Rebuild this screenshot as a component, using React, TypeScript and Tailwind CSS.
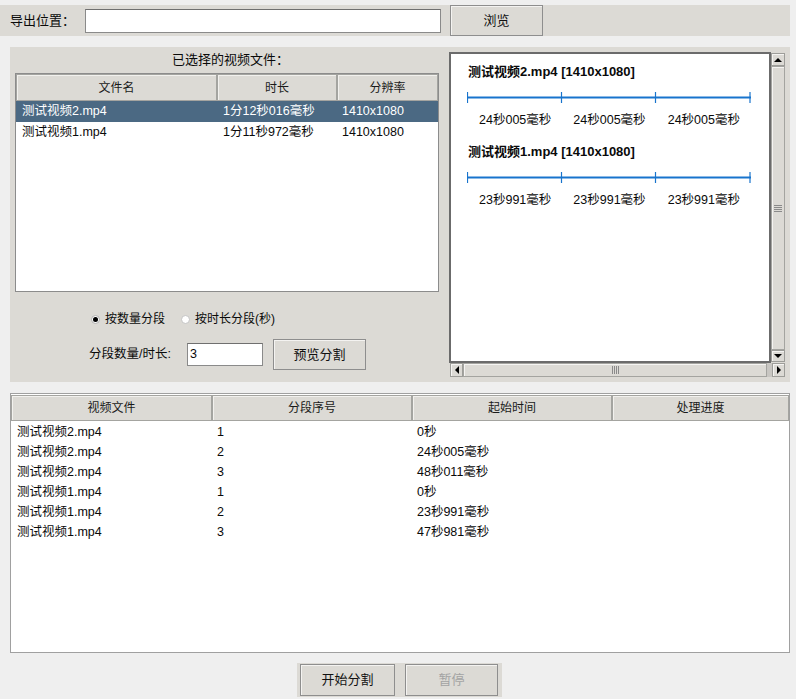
import React from "react";

const font = "font-['Liberation_Sans','Noto_Sans_CJK_SC',sans-serif]";

const selectedFiles = [
  { name: "测试视频2.mp4", duration: "1分12秒016毫秒", size: "1410x1080" },
  { name: "测试视频1.mp4", duration: "1分11秒972毫秒", size: "1410x1080" },
];

const previews = [
  { title: "测试视频2.mp4 [1410x1080]", parts: ["24秒005毫秒", "24秒005毫秒", "24秒005毫秒"] },
  { title: "测试视频1.mp4 [1410x1080]", parts: ["23秒991毫秒", "23秒991毫秒", "23秒991毫秒"] },
];

const segments = [
  { file: "测试视频2.mp4", idx: "1", start: "0秒" },
  { file: "测试视频2.mp4", idx: "2", start: "24秒005毫秒" },
  { file: "测试视频2.mp4", idx: "3", start: "48秒011毫秒" },
  { file: "测试视频1.mp4", idx: "1", start: "0秒" },
  { file: "测试视频1.mp4", idx: "2", start: "23秒991毫秒" },
  { file: "测试视频1.mp4", idx: "3", start: "47秒981毫秒" },
];

function Button({ children, className = "", disabled = false }: { children: React.ReactNode; className?: string; disabled?: boolean }) {
  return (
    <div
      className={`flex items-center justify-center bg-[#dcdad5] border border-[#8e8e8e] shadow-[inset_1px_1px_0_#f4f3f1] text-[13px] ${
        disabled ? "text-[#a3a3a3]" : "text-[#111]"
      } ${className}`}
    >
      {children}
    </div>
  );
}

function HeaderCell({ children, className = "" }: { children: React.ReactNode; className?: string }) {
  return (
    <div
      className={`flex items-center justify-center bg-[#dcdad5] border border-[#a4a4a0] shadow-[inset_1px_1px_0_#f2f1ee] text-[12px] text-[#1a1a1a] ${className}`}
    >
      {children}
    </div>
  );
}

function Timeline() {
  return (
    <svg width="284" height="11" className="block">
      <line x1="0" y1="5.5" x2="284" y2="5.5" stroke="#1874cd" strokeWidth="2" />
      {[0.5, 94.5, 188.5, 283].map((x) => (
        <line key={x} x1={x} y1="0" x2={x} y2="11" stroke="#1874cd" strokeWidth="1.2" />
      ))}
    </svg>
  );
}

function Arrow({ dir }: { dir: "up" | "down" | "left" | "right" }) {
  const pts = {
    up: "1,6 9,6 5,2",
    down: "1,2 9,2 5,6",
    left: "6,1 6,9 2,5",
    right: "2,1 2,9 6,5",
  }[dir];
  const w = dir === "up" || dir === "down" ? 10 : 8;
  const h = dir === "up" || dir === "down" ? 8 : 10;
  return (
    <svg width={w} height={h}>
      <polygon points={pts} fill="#000" />
    </svg>
  );
}

function ScrollBtn({ dir, className = "" }: { dir: "up" | "down" | "left" | "right"; className?: string }) {
  return (
    <div
      className={`flex items-center justify-center bg-[#dcdad5] border border-[#9d9d99] shadow-[inset_1px_1px_0_#f5f4f2] ${className}`}
    >
      <Arrow dir={dir} />
    </div>
  );
}

export default function App() {
  return (
    <div className={`w-[796px] h-[699px] bg-[#efefef] flex flex-col text-[12.5px] text-[#0a0a0a] ${font}`}>
      {/* export path bar */}
      <div className="mt-[5px] h-[31px] w-[790px] bg-[#dcdad5] flex items-center">
        <div className="ml-[10px] w-[75px] text-[13px]">导出位置：</div>
        <div className="w-[356px] h-[24px] bg-white border border-[#8a8a8a] border-t-[#6f6f6f]" />
        <Button className="ml-[9px] w-[93px] h-[31px]">浏览</Button>
      </div>

      {/* middle panel */}
      <div className="mt-[11px] ml-[10px] w-[780px] h-[335px] bg-[#dcdad5] flex">
        <div className="w-[439px] flex flex-col">
          <div className="h-[26px] flex items-center justify-center text-[13px] pl-[2px]">已选择的视频文件：</div>
          <div className="ml-[5px] w-[424px] h-[219px] bg-white border border-[#8c8c8c]">
            <div className="flex h-[27px]">
              <HeaderCell className="w-[201px]">文件名</HeaderCell>
              <HeaderCell className="w-[120px]">时长</HeaderCell>
              <HeaderCell className="w-[101px]">分辨率</HeaderCell>
            </div>
            {selectedFiles.map((f, i) => (
              <div
                key={f.name}
                className={`flex items-center ${i === 0 ? "h-[21px] bg-[#4b6983] text-white" : "h-[20px]"}`}
              >
                <div className="w-[201px] pl-[6px]">{f.name}</div>
                <div className="w-[120px] pl-[6px]">{f.duration}</div>
                <div className="w-[101px] pl-[5px]">{f.size}</div>
              </div>
            ))}
          </div>

          <div className="mt-[18px] h-[18px] flex items-center pl-[81px] text-[12px]">
            <div className="w-[9px] h-[9px] rounded-full bg-white border border-[#b0b0b0] flex items-center justify-center">
              <div className="w-[5px] h-[5px] rounded-full bg-black" />
            </div>
            <span className="ml-[5px]">按数量分段</span>
            <div className="ml-[16px] w-[9px] h-[9px] rounded-full bg-white border border-[#c4c4c4]" />
            <span className="ml-[5px]">按时长分段(秒)</span>
          </div>

          <div className="mt-[11px] h-[31px] flex items-center pl-[79px]">
            <span className="w-[98px]">分段数量/时长:</span>
            <div className="w-[76px] h-[23px] bg-white border border-[#8a8a8a] border-t-[#6f6f6f] flex items-center pl-[2px]">
              3
            </div>
            <Button className="ml-[10px] w-[93px] h-[31px]">预览分割</Button>
          </div>
        </div>

        {/* preview */}
        <div className="mt-[5px] w-[336px] h-[325px] flex flex-col">
          <div className="flex h-[311px]">
            <div className="w-[322px] h-full bg-white border-2 border-[#6b6b6b]">
              <div className="pl-[17px] pt-[10px]">
                {previews.map((p, i) => (
                  <div key={p.title} className={i === 0 ? "" : "mt-[17px]"}>
                    <div className="h-[16px] flex items-center font-bold text-[13px]">{p.title}</div>
                    <div className="mt-[12px] -ml-[1px]">
                      <Timeline />
                    </div>
                    <div className="mt-[8px] h-[16px] w-[283px] grid grid-cols-3 text-center items-center">
                      {p.parts.map((t, j) => (
                        <span key={j}>{t}</span>
                      ))}
                    </div>
                  </div>
                ))}
              </div>
            </div>
            <div className="w-[14px] h-full flex flex-col bg-[#dcdad5]">
              <ScrollBtn dir="up" className="h-[13px] mt-[1px]" />
              <div className="flex-1 border border-[#a4a4a0] shadow-[inset_1px_1px_0_#f5f4f2] flex items-center justify-center">
                <div className="w-[8px] flex flex-col gap-[1px]">
                  <div className="h-[1px] bg-[#8a8a8a]" />
                  <div className="h-[1px] bg-[#8a8a8a]" />
                  <div className="h-[1px] bg-[#8a8a8a]" />
                  <div className="h-[1px] bg-[#8a8a8a]" />
                </div>
              </div>
              <ScrollBtn dir="down" className="h-[12px] mb-[1px]" />
            </div>
          </div>
          <div className="h-[14px] flex bg-[#dcdad5]">
            <ScrollBtn dir="left" className="w-[13px] ml-[1px]" />
            <div className="flex-1 border border-[#a4a4a0] shadow-[inset_1px_1px_0_#f5f4f2] flex items-center justify-center">
              <div className="h-[8px] flex gap-[1px]">
                <div className="w-[1px] bg-[#8a8a8a]" />
                <div className="w-[1px] bg-[#8a8a8a]" />
                <div className="w-[1px] bg-[#8a8a8a]" />
                <div className="w-[1px] bg-[#8a8a8a]" />
              </div>
            </div>
            <div className="w-[5px] bg-[#c8c6c2]" />
            <ScrollBtn dir="right" className="w-[13px]" />
          </div>
        </div>
      </div>

      {/* segments table */}
      <div className="mt-[11px] ml-[10px] w-[780px] h-[260px] bg-white border border-[#a0a0a0]">
        <div className="flex h-[27px] pt-[1px]">
          <HeaderCell className="w-[201px]">视频文件</HeaderCell>
          <HeaderCell className="w-[200px]">分段序号</HeaderCell>
          <HeaderCell className="w-[200px]">起始时间</HeaderCell>
          <HeaderCell className="flex-1">处理进度</HeaderCell>
        </div>
        <div className="pt-[1px]">
          {segments.map((s, i) => (
            <div key={i} className="flex h-[20px] items-center">
              <div className="w-[201px] pl-[6px]">{s.file}</div>
              <div className="w-[200px] pl-[5px]">{s.idx}</div>
              <div className="w-[200px] pl-[5px]">{s.start}</div>
              <div className="flex-1" />
            </div>
          ))}
        </div>
      </div>

      {/* actions */}
      <div className="mt-[10px] ml-[297px] w-[205px] h-[34px] bg-[#dcdad5] flex items-center px-[3px] gap-[10px]">
        <Button className="w-[95px] h-[32px]">开始分割</Button>
        <Button className="w-[93px] h-[32px]" disabled>
          暂停
        </Button>
      </div>
    </div>
  );
}
